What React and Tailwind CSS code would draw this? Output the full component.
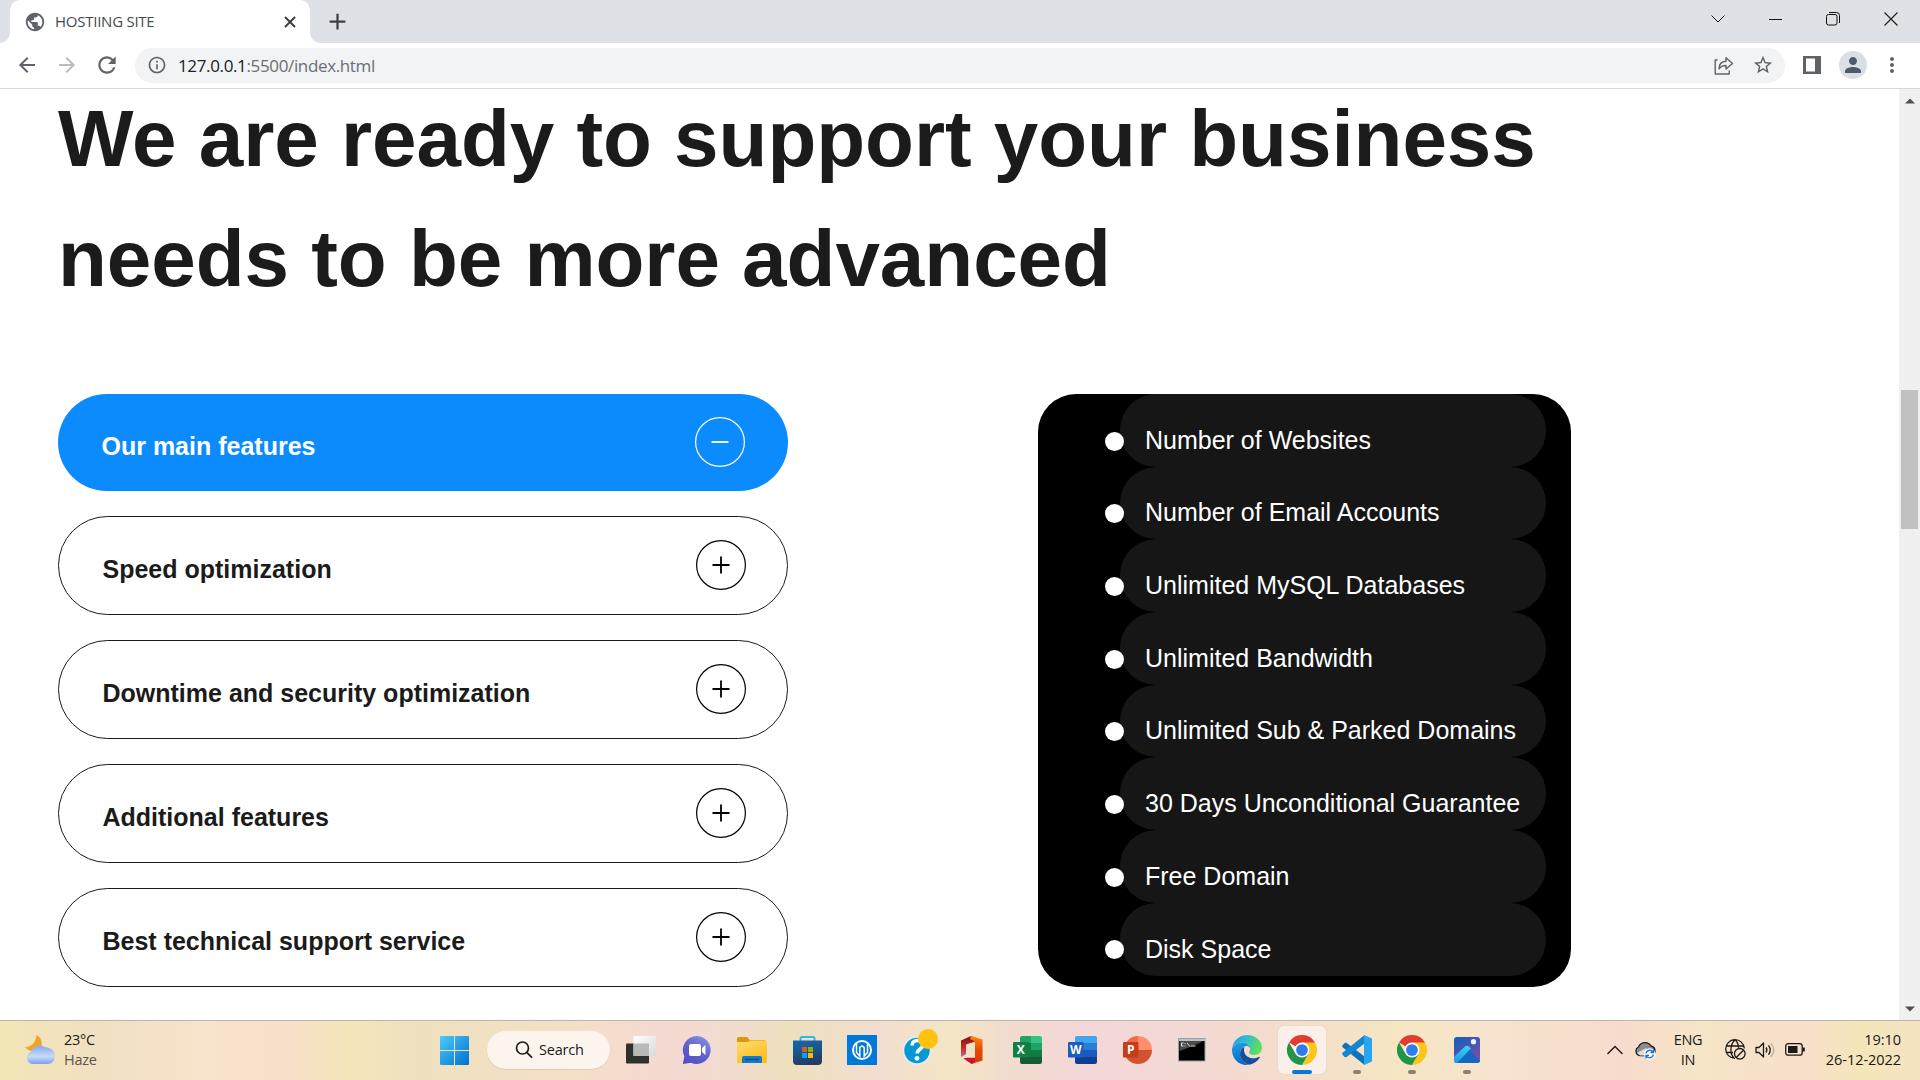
import React from "react";
import {
  MdPublic, MdArrowBack, MdArrowForward, MdRefresh, MdInfoOutline,
  MdStarBorder, MdPerson, MdMoreVert, MdAdd,
} from "react-icons/md";

const features = [
  "Our main features",
  "Speed optimization",
  "Downtime and security optimization",
  "Additional features",
  "Best technical support service",
];

const plan = [
  "Number of Websites",
  "Number of Email Accounts",
  "Unlimited MySQL Databases",
  "Unlimited Bandwidth",
  "Unlimited Sub & Parked Domains",
  "30 Days Unconditional Guarantee",
  "Free Domain",
  "Disk Space",
];

function TabStrip() {
  return (
    <div className="flex h-[43px] bg-[#dee1e6]">
      <div className="h-[10px] w-[10px] self-end bg-[radial-gradient(circle_at_0_0,#dee1e6_9.5px,#fff_10px)]" />
      <div className="flex w-[300px] items-center rounded-t-[10px] bg-white pl-[14px] pr-[14px]">
        <MdPublic className="size-[22px] text-[#5f6368]" />
        <span className="ml-[9px] flex-1 whitespace-nowrap pb-[2px] text-[15px] leading-5 tracking-[-0.25px] text-[#45494d]">HOSTIING SITE</span>
        <svg width="12" height="12" stroke="#3c4043" strokeWidth="2"><path d="m1 1 10 10M11 1 1 11" /></svg>
      </div>
      <div className="h-[10px] w-[10px] self-end bg-[radial-gradient(circle_at_100%_0,#dee1e6_9.5px,#fff_10px)]" />
      <MdAdd className="ml-[4px] mt-[8px] size-[27px] text-[#3c4043]" />
      <div className="ml-auto flex h-[37px] items-center">
        <svg className="mr-[44px]" width="14" height="14" fill="none" stroke="#111"><path d="M.5 3.500 7 10l6.500-6.500" /></svg>
        <svg className="mr-[43px]" width="14" height="14" fill="none" stroke="#111"><path d="M0 7.500h13" /></svg>
        <svg className="mr-[44px]" width="14" height="14" fill="none" stroke="#111"><rect x=".5" y="2.500" width="10.500" height="10.500" rx="2" /><path d="M3 .5h7.500a3 3 0 0 1 3 3V11" /></svg>
        <svg className="mr-[22px]" width="14" height="14" fill="none" stroke="#222" strokeWidth="1.200"><path d="m.5.5 13 13m0-13-13 13" /></svg>
      </div>
    </div>
  );
}

function Toolbar() {
  return (
    <div className="flex h-[46px] items-center border-b border-[#d5d7da] bg-white pb-px pl-[7px] text-[#5f6368]">
      <div className="flex w-10 justify-center"><MdArrowBack className="size-[24px]" /></div>
      <div className="flex w-10 justify-center"><MdArrowForward className="size-[24px] text-[#babcbe]" /></div>
      <div className="flex w-10 justify-center"><MdRefresh className="size-[26px]" /></div>
      <div className="ml-[8px] flex h-[35px] w-[1650px] items-center rounded-full bg-[#f1f3f4] pl-[12px] pr-[11px]">
        <MdInfoOutline className="size-[20px]" />
        <span className="ml-[11px] flex-1 pt-[1px] text-[17px] leading-6 tracking-[-0.36px] text-[#6a6e73]"><span className="text-[#202124]">127.0.0.1</span>:5500/index.html</span>
        <svg width="20" height="19" viewBox="0 0 20 19" fill="none" stroke="#5f6368" strokeWidth="1.400"><path d="M3.500 4H1.200v14h14v-3.500M5 13c0-4.500 2.500-7.500 7-7.700V1.800l6.500 5.700-6.500 5.500V9.500C9 9.500 6.500 10.500 5 13Z" strokeLinejoin="round" /></svg>
        <MdStarBorder className="ml-[18px] size-[22px]" />
      </div>
      <div className="ml-[8px] flex w-[38px] justify-center">
        <svg width="18" height="18"><rect width="18" height="18" fill="#5f6368" /><rect x="3" y="2.500" width="9" height="13" fill="#fff" /></svg>
      </div>
      <div className="ml-[8px] flex size-[28px] items-center justify-center rounded-full bg-[#dadfe5]"><MdPerson className="size-[24px] text-[#4c5a6b]" /></div>
      <MdMoreVert className="ml-[13px] size-[24px]" />
    </div>
  );
}

function Accordion() {
  return (
    <div className="flex w-[730px] flex-col gap-[25px]">
      {features.map((name, i) => (
        <div
          key={name}
          className={
            i === 0
              ? "flex h-[97px] items-center justify-between rounded-full bg-[#0c8bff] pb-[2px] pl-[43.5px] pr-[43px] text-white"
              : "flex h-[99px] items-center justify-between rounded-full border border-[#1b1b1b] pb-[2px] pl-[43.5px] pr-[41px] text-[#1b1b1b]"
          }
        >
          <span className="pt-[8px] text-[25px] font-bold leading-[38px]">{name}</span>
          <svg width="50" height="50" fill="none" stroke={i === 0 ? "#fff" : "#000"}>
            <circle cx="25" cy="25" r="24.400" strokeWidth="1.200" />
            <path d={i === 0 ? "M16.500 25h17" : "M16.500 25h17M25 16.500v17"} strokeWidth="1.800" />
          </svg>
        </div>
      ))}
    </div>
  );
}

function PlanList() {
  return (
    <ul className="ml-[250px] h-[593px] w-[533px] rounded-[38px] bg-black pl-[82px] pr-[25px]">
      {plan.map((name) => (
        <li key={name} className="relative flex h-[72.7px] items-center rounded-[36px] bg-[#161616] pl-[25px] pt-[18.7px] text-[25px] leading-[38px] text-white">
          <span className="absolute left-[-15px] top-[37.6px] size-[19px] rounded-full bg-white" />
          <span className="whitespace-nowrap">{name}</span>
        </li>
      ))}
    </ul>
  );
}

function Scrollbar() {
  return (
    <div className="flex w-[21px] flex-col items-center bg-[#f0f0f0]">
      <svg className="mt-[9px]" width="10" height="6"><path d="M0 5.500 5 .5l5 5Z" fill="#505050" /></svg>
      <div className="mt-[286px] h-[139px] w-[17px] bg-[#c1c1c1]" />
      <svg className="mb-[8px] mt-auto" width="10" height="6"><path d="M0 .5 5 5.500l5-5Z" fill="#505050" /></svg>
    </div>
  );
}

function Chrome() {
  return (
    <svg width="30" height="30" viewBox="0 0 48 48">
      <path d="M24 24 3.200 12A24 24 0 0 1 44.800 12Z" fill="#e33b2e" />
      <path d="M24 12h20.800A24 24 0 0 1 24 48l10.400-18Z" fill="#fdc41c" />
      <path d="M34.400 30 24 48A24 24 0 0 1 3.200 12l10.400 18Z" fill="#219447" />
      <circle cx="24" cy="24" r="12" fill="#fff" />
      <circle cx="24" cy="24" r="9.400" fill="#2f7ded" />
    </svg>
  );
}

function OfficeTile({ letter, dark, children }) {
  return (
    <svg width="30" height="30" viewBox="0 0 30 30">
      {children}
      <rect x="1" y="7" width="15.500" height="15.500" rx="1.200" fill={dark} />
      <text x="8.700" y="19" textAnchor="middle" fontFamily="Open Sans" fontWeight="700" fontSize="12" fill="#fff">{letter}</text>
    </svg>
  );
}

const taskView = (
  <svg width="32" height="30" viewBox="0 0 32 30">
    <defs><linearGradient id="tv" x2="1" y2="1"><stop stopColor="#fff" /><stop offset="1" stopColor="#d9d9d9" /></linearGradient></defs>
    <rect x="0" y="8.500" width="23" height="20" rx="1" fill="#30302e" />
    <rect x="7.500" y="1" width="22.500" height="20" rx="1" fill="url(#tv)" />
    <rect x="7.500" y="8.500" width="15.500" height="12.500" fill="#b9b9b8" />
  </svg>
);

const chat = (
  <svg width="30" height="30" viewBox="0 0 30 30">
    <defs><linearGradient id="ch" x1=".2" y1="1" x2=".8"><stop stopColor="#4f4fc4" /><stop offset=".5" stopColor="#6661cc" /><stop offset="1" stopColor="#8294e8" /></linearGradient></defs>
    <path d="M15 1a14 14 0 1 1-6 26.800L.8 29l1.600-7.500A14 14 0 0 1 15 1Z" fill="url(#ch)" />
    <rect x="7" y="9" width="12" height="12" rx="2" fill="#fff" />
    <path d="m20 13 3.500-3v10L20 17Z" fill="#fff" />
  </svg>
);

const folder = (
  <svg width="30" height="30" viewBox="0 0 30 30">
    <defs><linearGradient id="fo" x2=".6" y2="1"><stop stopColor="#ffdd70" /><stop offset="1" stopColor="#fcbd1f" /></linearGradient></defs>
    <path d="M0 3.500A1.500 1.500 0 0 1 1.500 2h8.700l2.400 3H28v8H0Z" fill="#dc9a07" />
    <path d="M0 7h11l2-1.500h15.500A1.500 1.500 0 0 1 30 7v21H0Z" fill="url(#fo)" />
    <path d="M5 28v-5a2 2 0 0 1 2-2h16a2 2 0 0 1 2 2v5Z" fill="#1178cc" />
    <path d="M8 24.500h14" stroke="#084b86" strokeWidth="1.200" />
  </svg>
);

const store = (
  <svg width="30" height="30" viewBox="0 0 30 30">
    <defs><linearGradient id="st" x2=".3" y2="1"><stop stopColor="#126bb5" /><stop offset="1" stopColor="#233c66" /></linearGradient></defs>
    <path d="M8.500 7V3.500A1.500 1.500 0 0 1 10 2h11a1.500 1.500 0 0 1 1.500 1.500V7" fill="none" stroke="#2cb7ee" strokeWidth="2" />
    <path d="M1 5.500h29V26a4 4 0 0 1-4 4H5a4 4 0 0 1-4-4Z" fill="url(#st)" />
    <path d="M10 12h5v5h-5Z" fill="#f25022" /><path d="M16 12h5v5h-5Z" fill="#7fba00" />
    <path d="M10 18h5v5h-5Z" fill="#00a4ef" /><path d="M16 18h5v5h-5Z" fill="#ffb900" />
  </svg>
);

const blueApp = (
  <svg width="30" height="30" viewBox="0 0 30 30">
    <rect width="30" height="30" fill="#0078d7" />
    <circle cx="15" cy="15" r="9" fill="none" stroke="#fff" strokeWidth="2" />
    <path d="M9.500 8.500v9l3.300 3.500v-8.500L15 11l2.200 1.500V21l3.300-3.500v-9" fill="none" stroke="#fff" strokeWidth="1.500" />
  </svg>
);

const help = (
  <svg className="overflow-visible" width="30" height="30" viewBox="0 0 30 30">
    <circle cx="15" cy="15.500" r="14.200" fill="#e3f1f6" />
    <circle cx="15" cy="15.500" r="12.700" fill="#0698d4" />
    <path d="M10 10.500C10 7 12.500 5.500 15.500 5.500s5.300 1.700 5.300 4.500c0 4-5.600 4-5.600 8.500" fill="none" stroke="#fff" strokeWidth="3.600" />
    <circle cx="15" cy="23.300" r="2.400" fill="#fff" />
    <circle cx="26" cy="4" r="10" fill="#ffc20e" />
  </svg>
);

const office = (
  <svg width="30" height="30" viewBox="0 0 30 30">
    <defs>
      <linearGradient id="of" y2="1" x2="0"><stop stopColor="#ff8a00" /><stop offset=".5" stopColor="#e64a05" /><stop offset="1" stopColor="#d83b01" /></linearGradient>
      <linearGradient id="og" y2="1" x2="0"><stop stopColor="#7d1010" /><stop offset=".6" stopColor="#cf2f2b" /><stop offset="1" stopColor="#b269ae" /></linearGradient>
    </defs>
    <path d="M14 1 4 5.500v16.500l5-2.800V9.500l9.500-3V2.800Z" fill="url(#og)" />
    <path d="m14 1 11.500 3.500v21L14.500 29l3.500-4V6.500L13 4Z" fill="url(#of)" />
    <path d="m6.500 23.500 3-.8H18V27l-3.500 2Z" fill="#c91330" />
  </svg>
);

const terminal = (
  <svg width="28" height="24" viewBox="0 0 28 24">
    <rect x=".5" y=".5" width="26.500" height="22.500" fill="#000" stroke="#9aa0a5" />
    <path d="M1 1h26v2H1Z" fill="#b9c3cc" />
    <path d="M1.500 3h24L15 8 1.500 13Z" fill="#4b4b4b" />
    <path d="M5.500 5H3.500v3h2M7 5v1m0 1.500v1M9 5l3 3.500M13 8h4.500" fill="none" stroke="#ddd" strokeWidth="1" />
  </svg>
);

const edge = (
  <svg width="30" height="30" viewBox="0 0 30 30">
    <defs>
      <linearGradient id="ea" x2="1" y2=".3"><stop stopColor="#1b9fdc" /><stop offset=".5" stopColor="#2fbfd0" /><stop offset="1" stopColor="#62dc5a" /></linearGradient>
      <linearGradient id="eb" x2=".3" y2="1"><stop stopColor="#22a2e6" /><stop offset="1" stopColor="#0b66c5" /></linearGradient>
    </defs>
    <path d="M.2 13C1.300 5.500 7.500 0 15 0c8.500 0 15 6 15 12.500 0 4.500-3.300 7.500-7.500 7.500-3.500 0-5.500-1.300-5.500-2.500 0-.8 1.200-1.200 1.200-3.500 0-3-3-6.500-8-6.500C5 7.500 1.500 10 .2 13Z" fill="url(#ea)" />
    <path d="M.2 13C2 9.500 5.500 7.500 10 7.500c5 0 8.200 3.500 8.200 6.500 0-1.500-1.500-3-3.500-3-3 0-6.700 3-6.700 8 0 5 4 9.500 9 10.800C7 31 0 24 0 15Z" fill="url(#eb)" />
    <path d="M12.500 12C9.500 13 8 16 8 19c0 5.500 4.500 10 9.500 10.700 4-.7 8-3.400 10.200-7 .3-.7-.3-1.200-.9-.8-6 3.200-14.300.6-14.800-6.400-.1-1.500.1-2.700.5-3.500Z" fill="#124f9c" />
  </svg>
);

const vscode = (
  <svg width="30" height="30" viewBox="0 0 30 30">
    <path d="m.4 10.500 2.300-2.400c.7-.5 1.400-.4 2 0L22.500 21.500V30L.6 12.200c-.6-.5-.7-1.100-.2-1.700Z" fill="#0b74bd" />
    <path d="m.4 19.500 2.300 2.400c.7.500 1.400.4 2 0L22.500 8.500V0L.6 17.800c-.6.500-.7 1.100-.2 1.700Z" fill="#1386cf" />
    <path d="M22 0 29 3a1.600 1.600 0 0 1 1 1.500v21a1.600 1.600 0 0 1-1 1.500l-7 3Z" fill="#27a6f2" />
  </svg>
);

const photos = (
  <svg width="26" height="26" viewBox="0 0 26 26">
    <defs>
      <linearGradient id="pa" x1=".2" y1="0" x2=".9" y2="1"><stop stopColor="#1d5cb8" /><stop offset="1" stopColor="#7d4fa8" /></linearGradient>
      <linearGradient id="pb" y2="1" x2="0"><stop stopColor="#39d2f5" /><stop offset="1" stopColor="#189ce0" /></linearGradient>
      <clipPath id="pc"><rect width="26" height="26" rx="3" /></clipPath>
    </defs>
    <g clipPath="url(#pc)">
      <rect width="26" height="26" fill="url(#pa)" />
      <path d="M13 11 28 26H2Z" fill="#1467c5" />
      <path d="M-2 22 11 9.500q2-1.500 4 0L17 11.500 3 26H-2Z" fill="url(#pb)" />
    </g>
    <circle cx="19.500" cy="4.700" r="2.600" fill="#e9f4fb" />
  </svg>
);

const excel = (
  <OfficeTile letter="X" dark="#128044">
    <path d="M8 3a2 2 0 0 1 2-2h9v7H8Z" fill="#21a366" /><path d="M19 1h9a2 2 0 0 1 2 2v5H19Z" fill="#33c481" />
    <path d="M8 8h11v7H8Z" fill="#107c41" /><path d="M19 8h11v7H19Z" fill="#21a366" />
    <path d="M8 15h22v7H8Z" fill="#107c41" /><path d="M8 22h22v5a2 2 0 0 1-2 2H10a2 2 0 0 1-2-2Z" fill="#185c37" />
  </OfficeTile>
);
const word = (
  <OfficeTile letter="W" dark="#1b5cbe">
    <path d="M8 8V3a2 2 0 0 1 2-2h18a2 2 0 0 1 2 2v5Z" fill="#41a5ee" /><path d="M8 8h22v7H8Z" fill="#2b7cd3" />
    <path d="M8 15h22v7H8Z" fill="#185abd" /><path d="M8 22h22v5a2 2 0 0 1-2 2H10a2 2 0 0 1-2-2Z" fill="#103f91" />
  </OfficeTile>
);
const powerpoint = (
  <OfficeTile letter="P" dark="#c43e1c">
    <path d="M16 1A14 14 0 0 0 2 15h14Z" fill="#ed6c47" /><path d="M16 1a14 14 0 0 1 14 14H16Z" fill="#ff8f6b" />
    <path d="M2 15h28a14 14 0 0 1-28 0Z" fill="#d35230" />
  </OfficeTile>
);

const pinned = [
  { id: "task-view", icon: taskView }, { id: "chat", icon: chat }, { id: "files", icon: folder },
  { id: "store", icon: store }, { id: "blue", icon: blueApp }, { id: "help", icon: help },
  { id: "office", icon: office }, { id: "excel", icon: excel }, { id: "word", icon: word },
  { id: "powerpoint", icon: powerpoint }, { id: "terminal", icon: terminal }, { id: "edge", icon: edge },
  { id: "chrome", icon: <Chrome />, state: "active" }, { id: "vscode", icon: vscode, state: "open" },
  { id: "chrome-2", icon: <Chrome />, state: "open" }, { id: "photos", icon: photos, state: "open" },
];

function Taskbar() {
  return (
    <footer className="flex h-[60px] border-t border-[#bfb3a4] bg-[linear-gradient(90deg,#f3e6b6_0px,#f1e0c2_100px,#f8e3cc_200px,#f9e0cc_280px,#f4e5b9_350px,#efe1c0_420px,#f4e0c6_560px,#f5dad2_660px,#f2dcd0_730px,#eee1be_790px,#f3ddd0_880px,#f4e6c5_950px,#f2dccf_1010px,#f4d7d8_1080px,#f3d9d4_1200px,#f5dfca_1310px,#f6e6c3_1400px,#f7e3cf_1500px,#f7dccd_1625px,#f6e5c6_1700px,#f8dfcc_1800px,#f5e6b9_1860px,#f4e3c2_1920px)] text-[14.500px] leading-[20px] text-[#1c1a17]">
      <div className="flex w-[440px] items-center pb-[2px] pl-[25px]">
        <svg width="30" height="30" viewBox="0 0 30 30">
          <defs><linearGradient id="cl" x2="0" y2="1"><stop stopColor="#84a9ee" /><stop offset=".6" stopColor="#c8daf8" /><stop offset="1" stopColor="#7ba0ea" /></linearGradient></defs>
          <path d="M11.500 0c6 3.500 6.800 10 3 14.500C10.500 17.500 4 17 0 12c6 .5 11-4.500 11.500-12Z" fill="#f2a324" />
          <path d="M7 29a6.500 6.500 0 0 1-.5-12.500 8.300 8.300 0 0 1 13-4.500c5.500.5 10.500 3 10.500 9a7.500 7.500 0 0 1-7.500 8Z" fill="url(#cl)" />
        </svg>
        <div className="ml-[9px] tracking-[-0.3px]"><div>23°C</div><div className="text-[#5b554b]">Haze</div></div>
      </div>
      <svg className="mt-[15px]" width="29" height="29" viewBox="0 0 29 29">
        <defs><linearGradient id="wi" x2="1" y2="1"><stop stopColor="#4ecbf8" /><stop offset="1" stopColor="#0070d0" /></linearGradient></defs>
        <path d="M1 0h13v14H0V1a1 1 0 0 1 1-1ZM15 0h13a1 1 0 0 1 1 1v13H15ZM0 15h14v14H1a1 1 0 0 1-1-1ZM15 15h14v13a1 1 0 0 1-1 1H15Z" fill="url(#wi)" />
      </svg>
      <div className="ml-[18px] mt-[10px] flex h-[38px] w-[123px] items-center rounded-full bg-[#fbf5ee] pl-[28px] shadow-[0_1px_1px_rgba(120,90,60,0.15)]">
        <svg width="18" height="18" fill="none" stroke="#1c1a17" strokeWidth="1.700"><circle cx="7.500" cy="7" r="6" /><path d="m11.700 11.300 5.300 5.300" /></svg>
        <span className="ml-[6px] tracking-[-0.2px]">Search</span>
      </div>
      <div className="ml-[4px] flex">
        {pinned.map((app) => (
          <div key={app.id} className="flex w-[55px] justify-center">
            <div className={app.state === "active" ? "relative mt-[5px] flex h-[48px] w-[48px] items-center justify-center rounded-[5px] bg-[#fbf0e9] shadow-[0_0_1px_rgba(120,90,60,0.35)]" : "relative mt-[5px] flex h-[48px] w-[48px] items-center justify-center"}>
              {app.icon}
              {app.state === "active" && <span className="absolute bottom-0 h-[4px] w-[20px] rounded-full bg-[#0a78d4]" />}
              {app.state === "open" && <span className="absolute bottom-0 h-[4px] w-[8px] rounded-full bg-[#8b8074]" />}
            </div>
          </div>
        ))}
      </div>
      <div className="ml-auto flex items-center pb-[2px] pr-[19px]">
        <svg width="16" height="10" fill="none" stroke="#1c1a17" strokeWidth="1.400"><path d="m.5 9 7.500-7.500L15.500 9" /></svg>
        <svg className="ml-[12px]" width="21" height="20" viewBox="0 0 21 20">
          <path d="M5 15.500A4.500 4.500 0 0 1 3.500 7 7 7 0 0 1 16 6c2.500.5 4 2.500 4 5 0 3-2 4.500-4.500 4.500Z" fill="#8d8d8d" stroke="#1c1a17" strokeWidth="1.300" />
          <path d="m2 13 9-5 4 7.500H5Z" fill="#ddd" />
          <circle cx="14.700" cy="14" r="5.700" fill="#fff" />
          <path d="M11 13.500a3.800 3.800 0 0 1 7-1.500m.3 2.500a3.800 3.800 0 0 1-7 1.500M18.500 9.500v3h-3M11 18.500v-3h3" fill="none" stroke="#1270c9" strokeWidth="1.300" />
        </svg>
        <div className="ml-[16px] mr-[1px] w-[32px] text-center tracking-[-0.3px]"><div>ENG</div><div>IN</div></div>
        <svg className="ml-[20px]" width="21" height="21" viewBox="0 0 21 21" fill="none" stroke="#1c1a17" strokeWidth="1.300">
          <path d="M10 19.300A9.300 9.300 0 1 1 19.300 9.500M1.500 7h17M1.500 13.500H8M9 19C5 15 4.500 6 10 .7M10 .7c2.500 2.300 3.500 5 3.500 8" />
          <circle cx="14.800" cy="14.800" r="5.300" /><path d="m11.200 18.500 7.300-7.300" />
        </svg>
        <svg className="ml-[9px]" width="21" height="18" viewBox="0 0 21 18" fill="none" stroke="#1c1a17" strokeWidth="1.300">
          <path d="M1 6.500h3L8.500 2v14L4 11.500H1Z" strokeLinejoin="round" /><path d="M11 6.500q1.800 2.500 0 5M13.500 4.300q3.500 4.700 0 9.400" /><path d="M16 2.200q5.500 6.800 0 13.600" stroke="#bbb09f" />
        </svg>
        <svg className="ml-[9px]" width="21" height="13" viewBox="0 0 21 13" fill="none" stroke="#1c1a17" strokeWidth="1.300">
          <rect x=".7" y=".7" width="16.500" height="11.500" rx="2.500" /><rect x="3" y="3" width="9.500" height="7" fill="#1c1a17" stroke="none" /><path d="M18.700 4.500v4" strokeWidth="2.200" />
        </svg>
        <div className="ml-[15px] w-[80px] whitespace-nowrap text-right tracking-[-0.05px]"><div>19:10</div><div>26-12-2022</div></div>
      </div>
    </footer>
  );
}

export default function App() {
  return (
    <div className="flex h-[1080px] w-[1920px] flex-col overflow-hidden bg-white font-['Open_Sans',sans-serif]">
      <TabStrip />
      <Toolbar />
      <div className="flex h-[931px] overflow-hidden">
        <main className="w-[1899px] overflow-hidden pl-[58px] font-['Liberation_Sans',Arial,sans-serif]">
          <h1 className="mt-[-10px] w-[1600px] text-[80px] font-bold leading-[120px] tracking-[-0.03px] text-[#1b1b1b]">We are ready to support your business<br />needs to be more advanced</h1>
          <div className="mt-[75px] flex">
            <Accordion />
            <PlanList />
          </div>
        </main>
        <Scrollbar />
      </div>
      <Taskbar />
    </div>
  );
}
